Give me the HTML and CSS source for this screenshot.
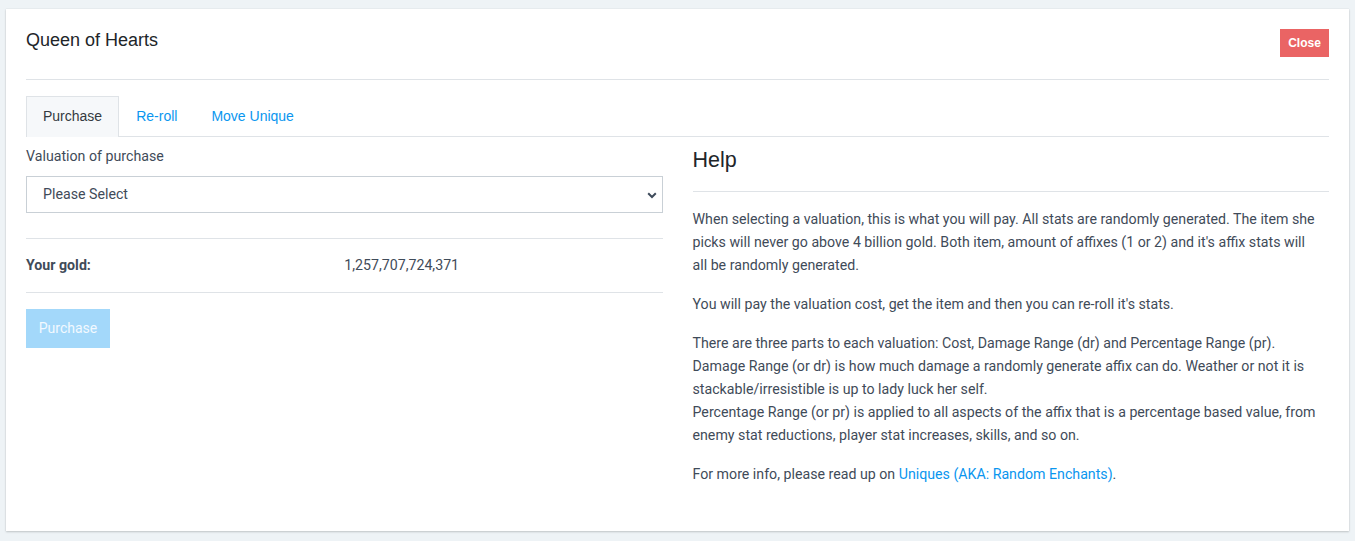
FILE: index.html
```html
<!DOCTYPE html>
<html>
<head>
<meta charset="utf-8">
<link rel="stylesheet" href="styles.css">
</head>
<body>
<div class="card">
  <div class="card-header">
    <h1 class="title">Queen of Hearts</h1>
    <button class="btn-close">Close</button>
  </div>
  <ul class="tabs">
    <li class="tab active">Purchase</li>
    <li class="tab">Re-roll</li>
    <li class="tab">Move Unique</li>
  </ul>
  <div class="columns">
    <div class="col-left">
      <label class="label">Valuation of purchase</label>
      <div class="select">
        <span>Please Select</span>
        <svg class="chevron" width="10" height="7" viewBox="0 0 10 7"><path d="M1.2 1.3 L5 5 L8.8 1.3" fill="none" stroke="#3e4b5b" stroke-width="2"/></svg>
      </div>
      <div class="gold-row">
        <div class="gold-label">Your gold:</div>
        <div class="gold-value">1,257,707,724,371</div>
      </div>
      <button class="btn-purchase">Purchase</button>
    </div>
    <div class="col-right">
      <h2 class="help-title">Help</h2>
      <p>When selecting a valuation, this is what you will pay. All stats are randomly generated. The item she picks will never go above 4 billion gold. Both item, amount of affixes (1 or 2) and it's affix stats will all be randomly generated.</p>
      <p>You will pay the valuation cost, get the item and then you can re-roll it's stats.</p>
      <p>There are three parts to each valuation: Cost, Damage Range (dr) and Percentage Range (pr).<br>Damage Range (or dr) is how much damage a randomly generate affix can do. Weather or not it is stackable/irresistible is up to lady luck her self.<br>Percentage Range (or pr) is applied to all aspects of the affix that is a percentage based value, from enemy stat reductions, player stat increases, skills, and so on.</p>
      <p>For more info, please read up on <a class="link">Uniques (AKA: Random Enchants)</a>.</p>
    </div>
  </div>
</div>
</body>
</html>
```

FILE: styles.css
```css
html, body {
  margin: 0;
  padding: 0;
  background: #eef3f6;
}
body {
  padding: 9px 6px 10px 6px;
  font-family: Roboto, "Liberation Sans", sans-serif;
  font-size: 14.2px;
  color: #3f4b59;
}
.card {
  background: #fff;
  box-shadow: 0 1px 2px rgba(0,0,0,0.18), 0 0 1px rgba(0,0,0,0.12);
  padding: 20px 20px 0 20px;
  height: 522px;
  box-sizing: border-box;
}
.card-header {
  display: flex;
  justify-content: space-between;
  align-items: flex-start;
  padding-bottom: 22px;
  border-bottom: 1px solid #dfe3e7;
}
.title {
  margin: 0;
  font-family: "Liberation Sans", Arial, sans-serif;
  font-weight: normal;
  font-size: 18px;
  line-height: 22px;
  color: #212529;
}
.btn-close {
  width: 49px;
  height: 28px;
  border: none;
  background: #ea6464;
  color: #fff;
  font-family: "Liberation Sans", Arial, sans-serif;
  font-size: 12px;
  font-weight: bold;
  padding: 0;
}
.tabs {
  list-style: none;
  margin: 16px 0 0 0;
  padding: 0;
  display: flex;
  border-bottom: 1px solid #dfe3e7;
}
.tab {
  height: 40px;
  padding: 0 16px 1px 16px;
  box-sizing: border-box;
  display: flex;
  align-items: center;
  font-family: "Liberation Sans", Arial, sans-serif;
  font-size: 14px;
  color: #0a96ef;
  border: 1px solid transparent;
  border-bottom: none;
}
.tab.active {
  color: #343a40;
  background: #f6f8fa;
  border-color: #dfe3e7;
  margin-bottom: -1px;
  height: 41px;
  padding-bottom: 2px;
}
.columns {
  display: flex;
  gap: 30px;
}
.col-left, .col-right {
  flex: 1 1 0;
}
.label {
  display: block;
  margin-top: 9px;
  line-height: 21px;
}
.select {
  margin-top: 9px;
  height: 37px;
  box-sizing: border-box;
  border: 1px solid #c9d0d6;
  display: flex;
  align-items: center;
  justify-content: space-between;
  padding: 0 5px 1px 16px;
}
.chevron {
  margin-top: 2px;
}
.gold-row {
  margin-top: 25px;
  border-top: 1px solid #dfe3e7;
  border-bottom: 1px solid #dfe3e7;
  display: grid;
  grid-template-columns: 1fr 1fr;
  padding: 16px 0;
  line-height: 21px;
}
.gold-label {
  font-weight: bold;
}
.btn-purchase {
  margin-top: 16px;
  width: 84px;
  height: 39px;
  border: none;
  background: #a3d8fa;
  color: #f2f9ff;
  font-family: Roboto, sans-serif;
  font-size: 14px;
  padding: 0 0 1px 0;
}
.help-title {
  margin: 11px 0 0 0;
  font-family: "Liberation Sans", Arial, sans-serif;
  font-weight: normal;
  font-size: 21.5px;
  line-height: 24px;
  color: #212529;
  padding-bottom: 19px;
  border-bottom: 1px solid #dfe3e7;
}
.col-right p {
  margin: 16px 0 0 0;
  padding-right: 7px;
  line-height: 23px;
}
.link {
  color: #0a96ef;
}
```
